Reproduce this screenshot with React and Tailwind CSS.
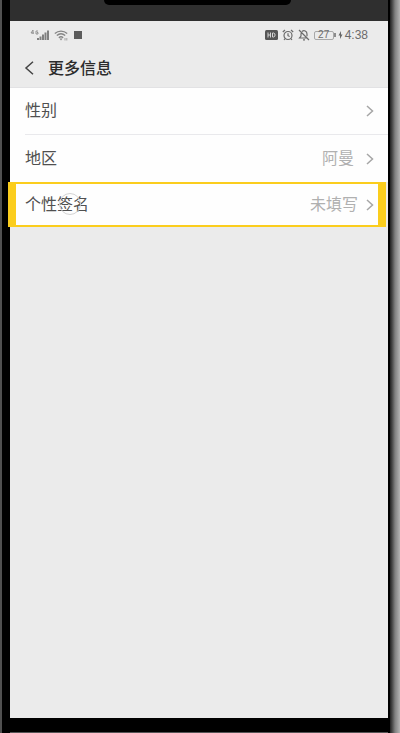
import React from 'react';

const FONT = "font-['Liberation_Sans','Noto_Sans_CJK_SC',sans-serif]";

const rows = [
    { id: 'gender', label: '性别', value: '' },
    { id: 'region', label: '地区', value: '阿曼' },
    { id: 'signature', label: '个性签名', value: '未填写', active: true },
];

function Chevron() {
    return (
        <svg width="8" height="12" viewBox="0 0 8 12" fill="none" stroke="#a6a6a6" strokeWidth="1.5" aria-hidden="true">
            <path d="M1 1l5.5 5L1 11" />
        </svg>
    );
}

function StatusBar() {
    return (
        <div className="flex h-7 items-center justify-between px-5 text-[#6b6b6b]">
            <div className="flex items-center gap-1">
                {/* Signal */}
                <svg width="20" height="12" viewBox="0 0 20 12" fill="#808080" aria-hidden="true">
                    <path d="M3 1L1 4h3M3 1v4M8 2H6v3h2V3.5H7" fill="none" stroke="#8a8a8a" strokeWidth=".9" />
                    <path d="M7 9h2v2H7zM9.500 7.500h2V11h-2zM12 5.500h2V11h-2zM14.500 3.500h2V11h-2zM17 1.500h2V11h-2z" />
                </svg>
                {/* Wifi */}
                <svg width="14" height="11" viewBox="0 0 14 11" fill="none" stroke="#858585" strokeWidth="1.3" aria-hidden="true">
                    <path d="M.8 3.500C4.500.2 9.500.2 13.200 3.500M2.800 5.600c2.500-2.200 5.900-2.200 8.400 0M4.800 7.700c1.300-1.100 3.100-1.100 4.400 0" />
                    <path d="M5.500 8.500h3L7 10.500z" fill="#858585" stroke="none" />
                    <path d="M11 8v2.500M12.800 8v2.500" strokeWidth=".7" />
                </svg>
                <span className="ml-0.5 h-2 w-2 bg-[#5c5c5c]"></span>
            </div>

            <div className="flex items-center gap-1">
                {/* HD */}
                <svg width="13" height="10" viewBox="0 0 13 10" aria-hidden="true">
                    <rect width="13" height="10" rx="1.5" fill="#555" />
                    <path d="M3 2.500v5M5.500 2.500v5M3 5h2.500M7.500 3h1.200c1.800 0 1.800 4 0 4H7.500z" fill="none" stroke="#d4d4d4" />
                </svg>
                {/* Alarm */}
                <svg width="12" height="12" viewBox="0 0 12 12" fill="none" stroke="#6b6b6b" strokeWidth="1.2" aria-hidden="true">
                    <circle cx="6" cy="6.500" r="4" />
                    <path d="M6 4.200v2.500l1.700.8M.8 3L3 1M11.200 3L9 1M3.200 9.500l-1.200 1.500M8.800 9.500l1.200 1.500" />
                </svg>
                {/* Muted bell */}
                <svg width="12" height="12" viewBox="0 0 12 12" fill="none" stroke="#6b6b6b" strokeWidth="1.2" aria-hidden="true">
                    <path d="M1 1l10 10M4 2.500C6 .8 9 2 9 5v2.200M3 4.300V7L1.500 9H9M5 10.800h2" />
                </svg>
                {/* Battery */}
                <span className="flex items-center">
                    <span className="flex h-[9px] w-[20px] items-center justify-center rounded-xs border border-[#a8a8a8] text-[10px] leading-none">27</span>
                    <span className="h-1 w-0.5 bg-[#8c8c8c]"></span>
                    <svg className="ml-0.5" width="5" height="8" viewBox="0 0 5 8" fill="#666" aria-hidden="true">
                        <path d="M3 0L.5 4.500h1.500L2 8l2.500-4.500H3z" />
                    </svg>
                </span>
                <span className="-ml-0.5 text-[12px] leading-3">4:38</span>
            </div>
        </div>
    );
}

export default function App() {
    return (
        <div className={`flex min-h-screen overflow-hidden bg-black ${FONT}`}>
            {/* Left edge of the phone */}
            <div className="w-[10px] shrink-0 border-l-2 border-[#505050] bg-black"></div>

            <div className="flex min-w-0 flex-1 flex-col">
                <div className="flex h-[21px] shrink-0 items-start justify-center bg-[#2f2f2f] pr-1">
                    <div className="h-[5px] w-1/2 rounded-b-md bg-black"></div>
                </div>

                <div className="flex flex-1 flex-col bg-[#ebebeb]">
                    <header className="border-b border-[#e2e2e4]">
                        <StatusBar />
                        <div className="flex h-[38px] items-center gap-3 pl-3">
                            <button type="button" aria-label="返回" className="flex w-[14px] justify-center">
                                <svg width="10" height="14" viewBox="0 0 10 14" fill="none" stroke="#444" strokeWidth="1.5" aria-hidden="true">
                                    <path d="M9 .8L2 7l7 6.200" />
                                </svg>
                            </button>
                            <h1 className="pt-0.5 text-[16px] leading-5 font-medium text-[#2b2b2b]">更多信息</h1>
                        </div>
                    </header>

                    <main className="flex flex-col">
                        {rows.map(row => row.active ? (
                            <button
                                key={row.id}
                                type="button"
                                className="-ml-[2px] mr-[2px] flex h-[45px] items-center justify-between border-x-8 border-y-2 border-[#fbcd1d] bg-[#fefefe] pl-[9px] pr-1"
                            >
                                <span className="relative text-[16px] leading-5 text-[#505050]">
                                    {row.label}
                                    {/* Touch point */}
                                    <span className="absolute left-[34px] -top-0.5 h-[22px] w-[22px] rounded-full border border-[#d4d4d4]"></span>
                                </span>
                                <span className="flex items-center gap-2 text-[16px] leading-5 text-[#b0b0b0]">
                                    {row.value}
                                    <Chevron />
                                </span>
                            </button>
                        ) : (
                            <div key={row.id} className="bg-[#fefefe] pl-[15px]">
                                <button
                                    type="button"
                                    className={`flex h-[47px] w-full items-center justify-between pr-[14px] ${row.id === 'gender' ? 'border-b border-[#e9e9ec]' : ''}`}
                                >
                                    <span className="text-[16px] leading-5 text-[#505050]">{row.label}</span>
                                    <span className="flex items-center gap-3 text-[16px] leading-5 text-[#b0b0b0]">
                                        {row.value}
                                        <Chevron />
                                    </span>
                                </button>
                            </div>
                        ))}
                    </main>
                </div>

                <div className="h-[15px] shrink-0 border-b border-[#555] bg-black"></div>
            </div>

            {/* Right edge of the phone */}
            <div className="w-[12px] shrink-0 border-l-2 border-black bg-linear-to-r from-[#222] via-[#808080] to-[#b4b4b4]"></div>
        </div>
    );
}
